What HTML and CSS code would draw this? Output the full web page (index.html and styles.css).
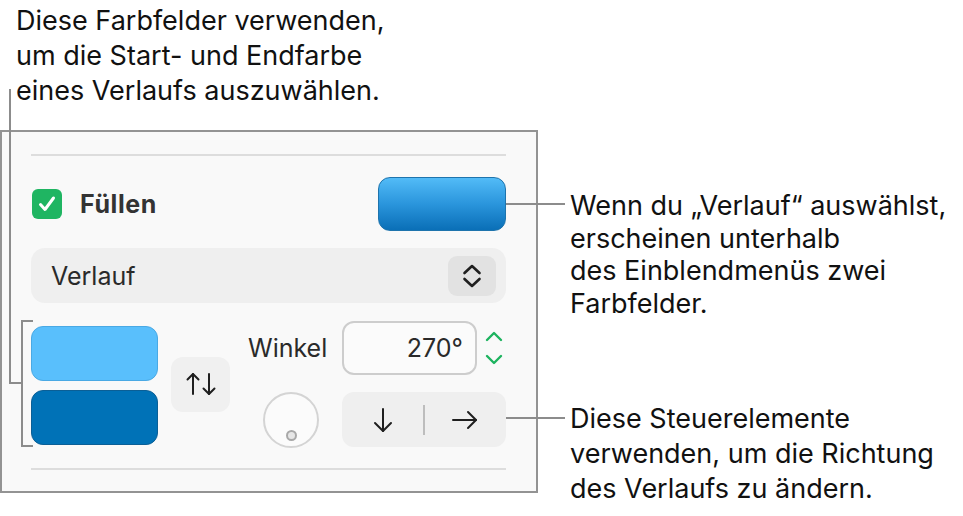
FILE: index.html
```html
<!DOCTYPE html>
<html lang="de">
<head>
<meta charset="utf-8">
<title>Füllen – Verlauf</title>
<link rel="stylesheet" href="styles.css">
</head>
<body>
<div class="figure">
  <p class="callout callout-top">Diese Farbfelder verwenden,<br>um die Start- und Endfarbe<br>eines Verlaufs auszuwählen.</p>
  <div class="top-spacer"></div>

  <section class="panel">
    <div class="sep"></div>
    <div class="fill-row">
      <div class="fill-label">
        <span class="checkbox">
          <svg width="30" height="30" viewBox="0 0 30 30"><polyline points="8.5,15.5 13,20.5 21.5,9" fill="none" stroke="#fff" stroke-width="3" stroke-linecap="round" stroke-linejoin="round"/></svg>
        </span>
        <span class="fill-text">Füllen</span>
      </div>
      <span class="well well-gradient"></span>
    </div>

    <div class="popup">
      <span class="popup-text">Verlauf</span>
      <span class="popup-stepper">
        <svg width="20" height="28" viewBox="0 0 20 28"><polyline points="2.5,11 10,4 17.5,11" fill="none" stroke="#1f1f1f" stroke-width="2.6" stroke-linecap="round" stroke-linejoin="round"/><polyline points="2.5,17 10,24 17.5,17" fill="none" stroke="#1f1f1f" stroke-width="2.6" stroke-linecap="round" stroke-linejoin="round"/></svg>
      </span>
    </div>

    <div class="gradient-row">
      <div class="wells">
        <span class="well well-light"></span>
        <span class="well well-dark"></span>
      </div>
      <span class="swap">
        <svg width="30" height="24" viewBox="0 0 30 24"><g fill="none" stroke="#1f1f1f" stroke-width="2" stroke-linecap="round" stroke-linejoin="round"><line x1="7" y1="2" x2="7" y2="22"/><polyline points="1.5,7.5 7,2 12.5,7.5"/><line x1="23" y1="2" x2="23" y2="22"/><polyline points="17.5,16.5 23,22 28.5,16.5"/></g></svg>
      </span>
      <div class="angle">
        <span class="angle-label">Winkel</span>
        <div class="angle-field-wrap">
          <span class="angle-field">270°</span>
          <span class="green-stepper">
            <svg width="18" height="36" viewBox="0 0 18 36"><g fill="none" stroke="#1db35f" stroke-width="2.4" stroke-linecap="round" stroke-linejoin="round"><polyline points="2,10 9,3 16,10"/><polyline points="2,26 9,33 16,26"/></g></svg>
          </span>
        </div>
        <span class="wheel"><span class="wheel-dot"></span></span>
        <div class="segmented">
          <span class="seg">
            <svg width="22" height="26" viewBox="0 0 22 26"><g fill="none" stroke="#1f1f1f" stroke-width="2" stroke-linecap="round" stroke-linejoin="round"><line x1="11" y1="2" x2="11" y2="24"/><polyline points="3,16 11,24 19,16"/></g></svg>
          </span>
          <span class="seg-divider"></span>
          <span class="seg">
            <svg width="28" height="20" viewBox="0 0 28 20"><g fill="none" stroke="#1f1f1f" stroke-width="2" stroke-linecap="round" stroke-linejoin="round"><line x1="2" y1="10" x2="25" y2="10"/><polyline points="17,2 25,10 17,18"/></g></svg>
          </span>
        </div>
      </div>
    </div>
    <div class="sep sep-bottom"></div>
  </section>

  <div class="callouts-right">
    <p class="callout callout-well">Wenn du „Verlauf“ auswählst,<br>erscheinen unterhalb<br>des Einblendmenüs zwei<br>Farbfelder.</p>
    <p class="callout callout-direction">Diese Steuerelemente<br>verwenden, um die Richtung<br>des Verlaufs zu ändern.</p>
  </div>

  <span class="leader leader-top-v"></span>
  <span class="leader leader-top-h"></span>
  <span class="leader bracket"></span>
  <span class="leader leader-well"></span>
  <span class="leader leader-direction"></span>
</div>
</body>
</html>
```

FILE: styles.css
```css
* { box-sizing: border-box; }

html, body {
  margin: 0;
  padding: 0;
  background: #ffffff;
}

body {
  font-family: Inter, "Noto Sans", "Liberation Sans", sans-serif;
  color: #111;
}

.figure {
  position: relative;
  width: 963px;
  height: 516px;
  display: grid;
  grid-template-columns: 538px 1fr;
  grid-template-rows: 130px 363px;
}

.callout {
  margin: 0;
  font-size: 27px;
  color: #111111;
  white-space: nowrap;
}

.callout-top {
  grid-column: 1;
  grid-row: 1;
  padding: 3px 0 0 16px;
  line-height: 35px;
}

/* Panel */
.panel {
  grid-column: 1;
  grid-row: 2;
  background: #f9f9f9;
  border: 2px solid #939393;
  padding: 22px 30px 0 29px;
  display: flex;
  flex-direction: column;
}

.sep {
  height: 2px;
  background: #dddddd;
}

.sep-bottom {
  margin-top: 21px;
}

.fill-row {
  margin-top: 21px;
  height: 54px;
  display: flex;
  align-items: center;
  justify-content: space-between;
}

.fill-label {
  display: flex;
  align-items: center;
  gap: 18px;
  padding-left: 1px;
}

.checkbox {
  width: 30px;
  height: 30px;
  border-radius: 6px;
  background: #1fb562;
  display: flex;
}

.fill-text {
  font-size: 25px;
  font-weight: 700;
  letter-spacing: 0.6px;
  color: #333333;
}

.well {
  display: block;
  border-radius: 12px;
}

.well-gradient {
  width: 128px;
  height: 54px;
  background: linear-gradient(to bottom, #52bbf7 0%, #2a95dc 50%, #0a6fb7 100%);
  border: 1.5px solid #1e74ad;
}

.popup {
  margin-top: 17px;
  height: 55px;
  border-radius: 14px;
  background: #efefef;
  display: flex;
  align-items: center;
  justify-content: space-between;
  padding: 0 10px 0 20px;
}

.popup-text {
  font-size: 25px;
  color: #2a2a2a;
}

.popup-stepper {
  width: 48px;
  height: 40px;
  border-radius: 9px;
  background: #e2e2e2;
  display: flex;
  align-items: center;
  justify-content: center;
}

/* Gradient controls */
.gradient-row {
  margin-top: 18px;
  display: flex;
  align-items: center;
}

.wells {
  display: flex;
  flex-direction: column;
  gap: 9px;
  padding-top: 3px;
}

.well-light,
.well-dark {
  width: 127px;
  height: 55px;
}

.well-light {
  background: #59bffc;
  border: 1.5px solid #4aa9e4;
}

.well-dark {
  background: #0072b7;
  border: 1.5px solid #0b5f96;
}

.swap {
  margin-left: 13px;
  width: 59px;
  height: 55px;
  border-radius: 12px;
  background: #f0f0f0;
  display: flex;
  align-items: center;
  justify-content: center;
}

.angle {
  margin-left: 18px;
  display: grid;
  grid-template-columns: 94px 164px;
  grid-template-rows: 54px 55px;
  row-gap: 17px;
  align-items: center;
}

.angle-label {
  font-size: 25px;
  color: #2a2a2a;
}

.angle-field-wrap {
  display: flex;
  align-items: center;
  height: 54px;
}

.angle-field {
  width: 135px;
  height: 54px;
  border: 2px solid #cdcdcd;
  border-radius: 12px;
  background: #fbfbfb;
  font-size: 25px;
  color: #2a2a2a;
  display: flex;
  align-items: center;
  justify-content: flex-end;
  padding-right: 12px;
}

.green-stepper {
  margin-left: 8px;
  display: flex;
}

.wheel {
  position: relative;
  margin-left: 15px;
  width: 56px;
  height: 56px;
  border-radius: 50%;
  border: 2px solid #d4d4d4;
  background: #fbfbfb;
}

.wheel-dot {
  position: absolute;
  left: 50%;
  top: 36px;
  width: 11px;
  height: 11px;
  margin-left: -5.5px;
  border-radius: 50%;
  border: 2px solid #a8a8a8;
  background: #e6e6e6;
}

.segmented {
  height: 55px;
  border-radius: 12px;
  background: #efefef;
  display: flex;
  align-items: center;
}

.seg {
  flex: 1;
  display: flex;
  align-items: center;
  justify-content: center;
}

.seg-divider {
  width: 1.5px;
  height: 30px;
  background: #bdbdbd;
}

/* Right callouts */
.callouts-right {
  grid-column: 2;
  grid-row: 2;
  padding-left: 32px;
  display: flex;
  flex-direction: column;
}

.callout-well {
  margin-top: 60px;
  line-height: 32.5px;
}

.callout-direction {
  margin-top: 81px;
  line-height: 35px;
}

/* Leader lines (overlay) */
.leader {
  position: absolute;
  background: #8c8c8c;
}

.leader-top-v {
  left: 9px;
  top: 89px;
  width: 2px;
  height: 295px;
}

.leader-top-h {
  left: 9px;
  top: 382px;
  width: 14px;
  height: 2px;
}

.bracket {
  background: transparent;
  left: 21px;
  top: 320px;
  width: 12px;
  height: 127px;
  border: 2px solid #8c8c8c;
  border-right: none;
}

.leader-well {
  left: 506px;
  top: 203px;
  width: 59px;
  height: 2px;
}

.leader-direction {
  left: 506px;
  top: 417px;
  width: 59px;
  height: 2px;
}
```
